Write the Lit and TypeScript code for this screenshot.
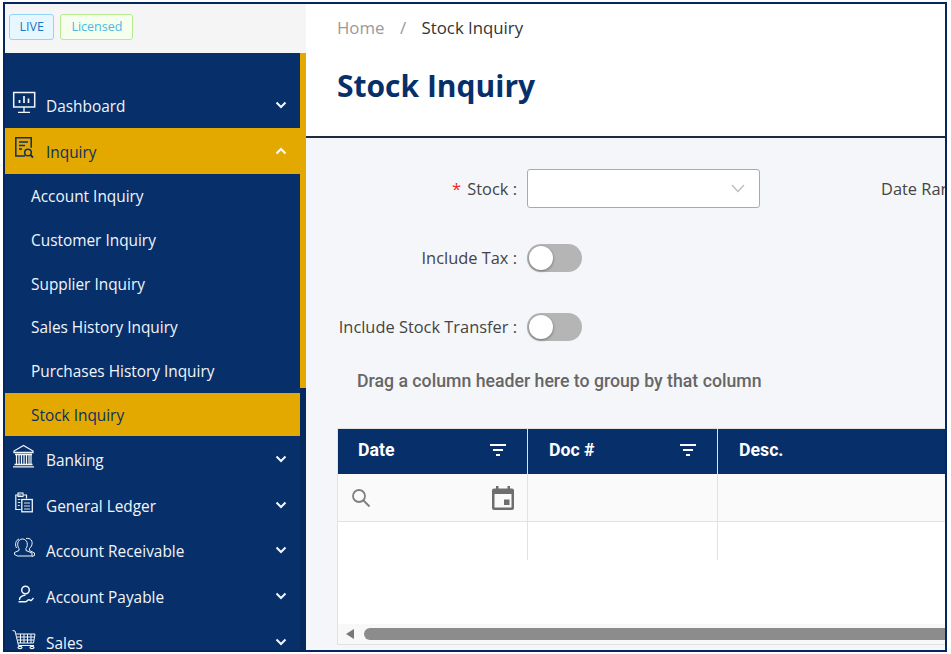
import { LitElement, html, css, svg } from "lit";
import { customElement } from "lit/decorators.js";

const chev = (up: boolean) => html`<svg class="chev" viewBox="0 0 12 8" width="12" height="8"><path d=${up ? "M1.5 6.5 6 2l4.5 4.5" : "M1.5 1.5 6 6l4.5-4.5"} fill="none" stroke="currentColor" stroke-width="2"/></svg>`;

const icon = (body: unknown) => html`<svg class="ico" viewBox="0 0 28 28" width="28" height="28" fill="none" stroke="currentColor" stroke-width="1.2">${body}</svg>`;

const icons: Record<string, unknown> = {
  dashboard: svg`<rect x="2.700" y="2.500" width="21" height="14.500" stroke-width="1.500"/><path d="M13 17v5M7 22.300h12" stroke-width="1.300"/><path d="M8.500 13v-3M13 13V6M17.500 13V8.500" stroke-width="1.700"/>`,
  inquiry: svg`<path d="M14 20H4.800V1.800h15.400v10" stroke-width="1.500"/><path d="M8 6h9M8 9.500h6M8 13h3" stroke-width="1.500"/><circle cx="17" cy="16.500" r="3.300" stroke-width="1.500"/><path d="m19.500 19 2.500 2.500" stroke-width="1.800"/>`,
  banking: svg`<path d="M12.500 1.500 3 7v1.500h19V7ZM4 10.500h17M3.500 20.500h18M2 22.800h21" stroke-width="1.300"/><path d="M5.500 11v9M8 11v9M10.500 11v9M13 11v9M15.500 11v9M18 11v9M20 11v9" stroke-width="1.200"/>`,
  ledger: svg`<path d="M10.500 5H4.800v14.500h5" stroke-width="1.200"/><rect x="7" y="3" width="5" height="3.500" stroke-width="1.100"/><path d="M12 5h3.500v3.500" stroke-width="1.200"/><rect x="10.800" y="9.500" width="10.500" height="12.300" stroke-width="1.300"/><path d="M13 13h6M13 16h6M13 19h6M6.800 9.500h2.500M6.800 12.500h2.500M6.800 15.500h2" stroke-width=".9"/>`,
  receivable: svg`<path d="M8 13.500c-2.500-3-1.500-9.500 3.500-9.500s6 6.500 3.500 9.500v2l6 2.500v3H6.500l-3-1.500v-2L8 15.500Z" stroke-width="1"/><path d="M5.500 13C3.500 9 5 5 8 4M15 3.500c4.500-1 7.500 2.500 5.500 7.500l-2 2.500v2l5 2.500v2.500l-2.500 1" stroke-width="1"/>`,
  payable: svg`<circle cx="14.500" cy="9" r="3.800" stroke-width="1.500"/><path d="M8.500 19c-.5-3 3-4.500 6-5M7.500 20.700h7c1.500 0 2-2 3.500-2s1 1.500 2.300.7l2.200-2.400" stroke-width="1.400"/>`,
  sales: svg`<path d="M1.500 3.500 4 4l3.500 14.500H23M5 7h19l-1.500 9H7M6 10h17.500M6.500 13h16.500M9.500 7v9M13 7v9M16.500 7v9M20 7v9" stroke-width="1"/><ellipse cx="9" cy="20.500" rx="2" ry="1.200"/><ellipse cx="21" cy="20.500" rx="2" ry="1.200"/>`,
};

@customElement("app-root")
export class AppRoot extends LitElement {
  static styles = css`
    :host { display: block; width: 951px; height: 654px; background: #fff; padding: 2px 4px 2px 3px; box-sizing: border-box; font-family: "Open Sans", "Noto Sans", sans-serif; }
    .frame { display: flex; height: 100%; box-sizing: border-box; border: 2px solid #06265f; overflow: hidden; }
    .side { width: 301px; flex: none; display: flex; flex-direction: column; background: #07306a; }
    .badges { height: 49px; flex: none; box-sizing: border-box; padding: 10px 4px 0; display: flex; gap: 6px; align-items: flex-start; background: #f5f5f5; }
    .badge { font-size: 12.500px; height: 26px; box-sizing: border-box; line-height: 24px; border-radius: 3px; border: 1px solid; }
    .live { color: #1677c8; background: #e6f7ff; border-color: #91d5ff; padding: 0 9.500px; }
    .lic { color: #48b8e8; background: #f6ffed; border-color: #b7eb8f; padding: 0 10px; }
    .nav-wrap { flex: 1; display: flex; min-height: 0; overflow: hidden; }
    .nav { width: 295px; flex: none; padding-top: 29px; color: #f2f5fa; font-size: 15.400px; }
    .track { flex: 1; background: #062a5e; }
    .thumb { height: 335px; background: #e3a900; }
    .row { height: 45.700px; display: flex; align-items: center; box-sizing: border-box; padding: 4px 13px 0 6px; }
    .row .label { flex: 1; margin-left: 7px; }
    .row.open { background: #e3a900; color: #0d2f62; height: 46px; }
    .row.open .chev { color: #fff; }
    .ico { flex: none; margin-top: -5px; }
    .chev { flex: none; margin-top: -3px; }
    .sub { height: 43.800px; box-sizing: border-box; display: flex; align-items: center; padding: 2px 0 0 26px; }
    .sub.active { background: #e3a900; color: #0d2f62; height: 43px; }
    .main { flex: 1; min-width: 0; display: flex; flex-direction: column; background: #f5f6fa; overflow: hidden; }
    .head { height: 134px; flex: none; box-sizing: border-box; background: #fff; border-bottom: 2px solid #1d2b45; padding: 12px 31px 0; }
    .crumb { font-size: 16.800px; line-height: 24px; color: #333; display: flex; }
    .crumb .home { color: #999; }
    .crumb .sep { color: #999; margin: 0 15.500px; }
    h1 { margin: 26px 0 0; font-size: 30px; line-height: 40px; font-weight: 700; color: #07306a; }
    .form { padding: 31px 0 0 32px; display: flex; flex-direction: column; gap: 29.600px; }
    .frow { display: flex; align-items: center; height: 39.500px; font-size: 16.400px; color: #444; white-space: nowrap; }
    .flabel { width: 179px; flex: none; text-align: right; margin-right: 10px; }
    .req { color: #f5222d; margin-right: 2px; }
    .select { width: 233px; height: 39px; flex: none; box-sizing: border-box; background: #fff; border: 1px solid #aaa; border-radius: 3px; display: flex; align-items: center; justify-content: flex-end; padding-right: 14px; }
    .drl { margin-left: 121px; }
    .toggle { width: 55px; height: 28px; flex: none; border-radius: 14px; background: #b5b5b5; box-sizing: border-box; padding: 2px; }
    .knob { display: block; width: 24px; height: 24px; border-radius: 50%; background: #fff; box-shadow: 0 1px 3px rgba(0,0,0,.4); }
    .group { margin: 22.800px 0 0 51px; font: 500 17.700px/24px Roboto, sans-serif; color: #666; height: 59px; }
    .grid { margin-left: 31px; width: 800px; flex: 1; min-height: 0; margin-bottom: 5px; border: 1px solid #e2e2e2; background: #fff; display: flex; flex-direction: column; font-family: Roboto, sans-serif; }
    .tr { display: grid; grid-template-columns: 190px 190px 1fr; flex: none; }
    .thead { background: #07306a; color: #fff; height: 45px; font-weight: 700; font-size: 17.700px; }
    .th { display: flex; align-items: center; justify-content: space-between; padding: 0 21px 4px 21px; border-right: 1px solid #e2e2e2; }
    .th:first-child { padding-left: 20px; }
    .fr { height: 48px; background: #fafafa; border-bottom: 1px solid #e2e2e2; box-sizing: border-box; }
    .fc { border-right: 1px solid #e2e2e2; display: flex; align-items: center; justify-content: space-between; padding: 0 12px; }
    .dr { height: 38px; }
    .dr div { border-right: 1px solid #e2e2e2; }
    .spacer { flex: 1; }
    .sb { height: 20px; flex: none; background: #f8f8f8; display: flex; align-items: center; padding-left: 8px; gap: 10px; }
    .arrow { width: 0; height: 0; border: 5px solid transparent; border-right: 8px solid #777; border-left: 0; }
    .bar { flex: 1; height: 12px; background: #8c8c8c; border-radius: 6px 0 0 6px; }
  `;

  private renderRow(k: string, label: string, open = false) {
    return html`<div class="row ${open ? "open" : ""}">${icon(icons[k])}<span class="label">${label}</span>${chev(open)}</div>`;
  }

  render() {
    const subs = ["Account Inquiry", "Customer Inquiry", "Supplier Inquiry", "Sales History Inquiry", "Purchases History Inquiry"];
    const filter = html`<svg width="16" height="14" viewBox="0 0 16 14"><path d="M0 2h16M3 7h10M6 12h4" stroke="#fff" stroke-width="2"/></svg>`;
    return html`<div class="frame">
      <aside class="side">
        <div class="badges"><span class="badge live">LIVE</span><span class="badge lic">Licensed</span></div>
        <div class="nav-wrap">
          <nav class="nav">
            ${this.renderRow("dashboard", "Dashboard")}
            ${this.renderRow("inquiry", "Inquiry", true)}
            ${subs.map((s) => html`<div class="sub">${s}</div>`)}
            <div class="sub active">Stock Inquiry</div>
            ${this.renderRow("banking", "Banking")}
            ${this.renderRow("ledger", "General Ledger")}
            ${this.renderRow("receivable", "Account Receivable")}
            ${this.renderRow("payable", "Account Payable")}
            ${this.renderRow("sales", "Sales")}
          </nav>
          <div class="track"><div class="thumb"></div></div>
        </div>
      </aside>
      <main class="main">
        <header class="head">
          <div class="crumb"><span class="home">Home</span><span class="sep">/</span><span>Stock Inquiry</span></div>
          <h1>Stock Inquiry</h1>
        </header>
        <div class="form">
          <div class="frow"><span class="flabel"><span class="req">*</span> Stock :</span>
            <div class="select"><svg width="14" height="9" viewBox="0 0 14 9"><path d="M1 1l6 6.500L13 1" fill="none" stroke="#bbb" stroke-width="1.200"/></svg></div>
            <span class="drl">Date Range :</span></div>
          <div class="frow"><span class="flabel">Include Tax :</span><span class="toggle"><span class="knob"></span></span></div>
          <div class="frow"><span class="flabel">Include Stock Transfer :</span><span class="toggle"><span class="knob"></span></span></div>
        </div>
        <div class="group">Drag a column header here to group by that column</div>
        <div class="grid">
          <div class="tr thead"><div class="th">Date ${filter}</div><div class="th">Doc # ${filter}</div><div class="th">Desc.</div></div>
          <div class="tr fr">
            <div class="fc">
              <svg width="22" height="22" viewBox="0 0 22 22"><circle cx="9" cy="9" r="6" fill="none" stroke="#808080" stroke-width="1.800"/><path d="m13.500 13.500 6 6" stroke="#808080" stroke-width="2"/></svg>
              <svg width="24" height="26" viewBox="0 0 24 26"><path fill="#6e6e6e" fill-rule="evenodd" d="M5 1h2.500v2.500h9V1H19v2.500h2a2 2 0 0 1 2 2V23a2 2 0 0 1-2 2H3a2 2 0 0 1-2-2V5.500a2 2 0 0 1 2-2h2ZM3.500 9v13.500h17V9ZM13 14.500h5.500V20H13Z"/></svg>
            </div>
            <div class="fc"></div><div class="fc"></div>
          </div>
          <div class="tr dr"><div></div><div></div><div></div></div>
          <div class="spacer"></div>
          <div class="sb"><span class="arrow"></span><span class="bar"></span></div>
        </div>
      </main>
    </div>`;
  }
}
